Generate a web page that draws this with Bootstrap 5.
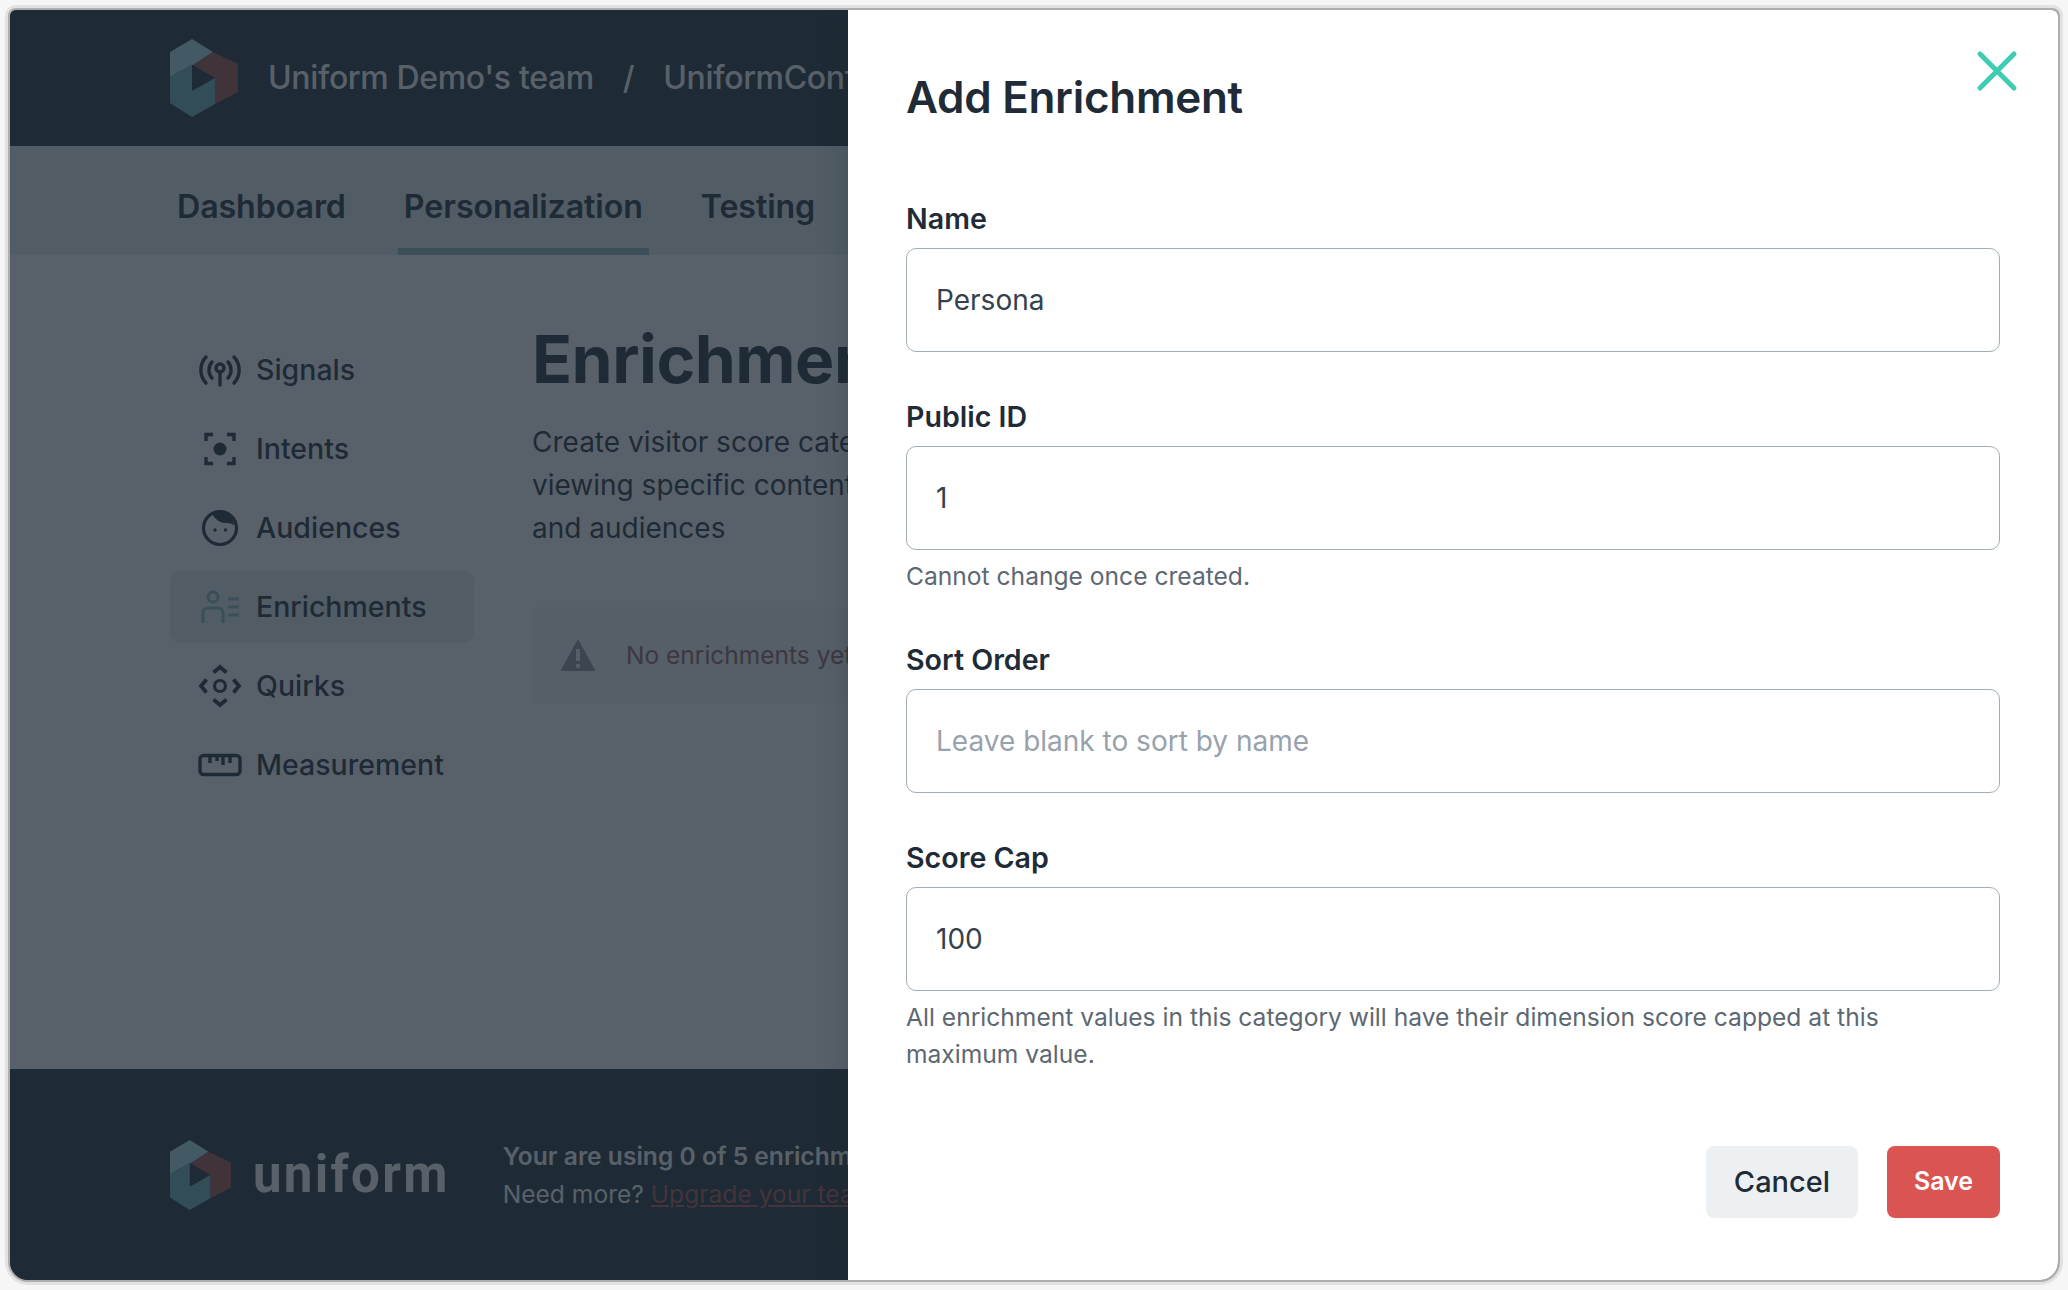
<!DOCTYPE html>
<html lang="en">
<head>
  <meta charset="UTF-8" />
  <title>Add Enrichment</title>
  <link href="https://cdn.jsdelivr.net/npm/bootstrap@5.3.2/dist/css/bootstrap.min.css" rel="stylesheet" />
  <style>
    html, body { height: 100%; }
    body {
      background: #f6f6f6;
      padding: 10px;
      font-family: Inter, "Noto Sans", sans-serif;
      color: #1f2b36;
      overflow: hidden;
    }
    .app-window {
      width: 2048px;
      height: 1270px;
      border-radius: 6px 6px 18px 18px;
      overflow: hidden;
      background: #fff;
      box-shadow: 0 0 0 2px #aeaeae, 0 0 0 5px #e2e2e2;
    }
    .top-bar { height: 136px; background: #1f2b36; padding-left: 160px; color: #fff; font-size: 32px; font-weight: 500; white-space: nowrap; letter-spacing: -.35px; }
    .head-logo { margin-right: 30px; }
    .crumb-sep { margin: 0 29px; }
    .tab-bar { height: 109px; background: #e2ecef; padding-left: 161px; }
    .tab-item { font-size: 32.2px; font-weight: 600; color: #1f2b36; padding: 0 6px; height: 109px; line-height: 121px; letter-spacing: -.1px; }
    .tab-item.is-active { border-bottom: 7px solid #8ab9c4; }
    .tab-gap { gap: 46px; }
    .main-area { padding: 65px 0 0 160px; }
    .side-menu { width: 304px; padding-top: 14px; }
    .side-link { height: 72px; margin-bottom: 7px; padding-left: 28px; gap: 14px; font-size: 28.5px; font-weight: 500; border-radius: 10px; color: #1f2b36; }
    .side-link.is-active { background: #e2ecef; }
    .page-body { margin-left: 58px; white-space: nowrap; }
    .page-title { font-size: 66px; font-weight: 700; line-height: 79px; margin: 0 0 22px; letter-spacing: -.5px; }
    .page-text { font-size: 28px; line-height: 43px; margin: 0 0 57px; }
    .empty-box { width: 600px; height: 96px; padding-left: 28px; gap: 30px; background: #f4f5f6; border-radius: 8px; color: #985c5c; font-size: 24.5px; }
    .foot-bar { height: 211px; background: #1f2b36; padding-left: 160px; color: #fff; white-space: nowrap; }
    .word-mark { font-family: Roboto, sans-serif; font-size: 51px; font-weight: 700; letter-spacing: 2.3px; margin-left: 22px; line-height: 1; }
    .foot-text { margin-left: 53px; font-size: 24.6px; line-height: 38px; }
    .foot-text a { color: #b0524f; }
    .dim-layer { background: rgba(30, 42, 53, .74); }
    .side-panel {
      width: 1210px;
      background: #fff;
      padding: 62px 58px 62px;
      box-shadow: 0 0 24px rgba(30, 42, 53, .25);
    }
    .panel-title { font-size: 44px; font-weight: 600; line-height: 50px; margin: 0 0 79px; letter-spacing: -.3px; }
    .close-x { top: 40px; right: 40px; width: 42px; height: 42px; background: none; border: 0; padding: 0; }
    .field-block { margin-bottom: 47px; }
    .field-label { font-size: 28.6px; font-weight: 600; line-height: 36px; margin-bottom: 11px; }
    .field-input {
      height: 104px;
      padding: 0 29px;
      font-size: 28px;
      color: #35424d;
      border: 1px solid #a3adb5;
      border-radius: 10px;
    }
    .field-input::placeholder { color: #98a2ab; }
    .field-help { font-size: 24.6px; line-height: 37px; margin-top: 8px; color: #5d6872; max-width: 1040px; }
    .btn-cancel { width: 152px; height: 72px; background: #ecf0f2; color: #1f2b36; font-size: 29px; font-weight: 500; border: 0; border-radius: 8px; }
    .btn-save { width: 113px; height: 72px; background: #da5551; color: #fff; font-size: 25px; font-weight: 600; border: 0; border-radius: 8px; }
    .panel-actions { gap: 29px; }
  </style>
</head>
<body>
<div class="app-window position-relative d-flex flex-column">

  <header class="top-bar d-flex align-items-center">
    <svg width="68" height="78" viewBox="0 0 68 78" class="head-logo flex-shrink-0">
      <polygon points="22,0 43,13 23,26 22,26 0,38 0,13" fill="#aee0e6"/>
      <polygon points="43,13 68,25 68,53 45,65 45,39 23,26" fill="#a14d49"/>
      <polygon points="0,38 22,26 22,52 45,39 45,65 22,78 0,64" fill="#6fb0bc"/>
    </svg>
    <span>Uniform Demo's team</span>
    <span class="crumb-sep">/</span>
    <span>UniformConf</span>
  </header>

  <nav class="tab-bar d-flex tab-gap">
    <a class="tab-item text-decoration-none">Dashboard</a>
    <a class="tab-item text-decoration-none is-active">Personalization</a>
    <a class="tab-item text-decoration-none">Testing</a>
  </nav>

  <main class="main-area flex-grow-1 d-flex">
    <div class="side-menu flex-shrink-0">
      <div class="side-link d-flex align-items-center">
        <svg width="44" height="44" viewBox="0 0 44 44" fill="none" stroke="#1f2b36" stroke-width="3.4" stroke-linecap="round">
          <path d="M8 9a19 19 0 0 0 0 26M36 9a19 19 0 0 1 0 26M14 14a12 12 0 0 0 0 16M30 14a12 12 0 0 1 0 16"/>
          <circle cx="22" cy="20" r="4"/><path d="M22 24v13"/>
        </svg>
        Signals
      </div>
      <div class="side-link d-flex align-items-center">
        <svg width="44" height="44" viewBox="0 0 44 44" fill="none" stroke="#1f2b36" stroke-width="3.4">
          <path d="M8 14V7.500h7M29 7.500h7V14M8 30v6.500h7M29 36.500h7V30"/>
          <circle cx="22" cy="22" r="6.500" fill="#1f2b36" stroke="none"/>
        </svg>
        Intents
      </div>
      <div class="side-link d-flex align-items-center">
        <svg width="44" height="44" viewBox="0 0 44 44" fill="none" stroke="#1f2b36" stroke-width="3.2">
          <circle cx="22" cy="22" r="16.500"/>
          <path d="M14 8c3 5 8 9 13 9 4 0 7 0 9 3C36 12 30 5 22 5c-3 0-6 1-8 3z" fill="#1f2b36" stroke="none"/>
          <circle cx="17" cy="24" r="1.700" fill="#1f2b36" stroke="none"/>
          <circle cx="27.500" cy="24" r="1.700" fill="#1f2b36" stroke="none"/>
        </svg>
        Audiences
      </div>
      <div class="side-link is-active d-flex align-items-center">
        <svg width="44" height="44" viewBox="0 0 44 44" fill="none" stroke="#8ab9c4" stroke-width="3">
          <circle cx="15" cy="12" r="5"/>
          <path d="M5 38V28c0-3 2-5 5-5h10c3 0 5 2 5 5v10"/>
          <path d="M30 14h11M30 22h11M30 30h11"/>
        </svg>
        Enrichments
      </div>
      <div class="side-link d-flex align-items-center">
        <svg width="44" height="44" viewBox="0 0 44 44" fill="none" stroke="#1f2b36" stroke-width="3.800">
          <circle cx="22" cy="22" r="5.500" stroke-width="3.200"/>
          <path d="M15.500 8.500L22 3l6.500 5.500M15.500 35.500L22 41l6.500-5.500M8.500 15.500L3 22l5.500 6.500M35.500 15.500L41 22l-5.500 6.500"/>
        </svg>
        Quirks
      </div>
      <div class="side-link d-flex align-items-center">
        <svg width="44" height="44" viewBox="0 0 44 44" fill="none" stroke="#1f2b36" stroke-width="3.400">
          <rect x="2" y="12.500" width="40" height="19" rx="3.500"/>
          <path d="M12 12v8M19 12v6M25 12v10M32 12v8"/>
        </svg>
        Measurement
      </div>
    </div>
    <section class="page-body">
      <h1 class="page-title">Enrichments</h1>
      <p class="page-text">Create visitor score categories to track when visitors are<br>viewing specific content, and use them for personalization<br>and audiences</p>
      <div class="empty-box d-flex align-items-center">
        <svg width="36" height="34" viewBox="0 0 36 34">
          <path d="M18 1L35 32a1 1 0 0 1-1 1H2a1 1 0 0 1-1-1z" fill="#8f969d"/>
          <rect x="16" y="11" width="4" height="12" fill="#f4f5f6"/>
          <rect x="16" y="26" width="4" height="4" fill="#f4f5f6"/>
        </svg>
        <span>No enrichments yet</span>
      </div>
    </section>
  </main>

  <footer class="foot-bar d-flex align-items-center">
    <svg width="61" height="70" viewBox="0 0 68 78" preserveAspectRatio="none" class="flex-shrink-0">
      <polygon points="22,0 43,13 23,26 22,26 0,38 0,13" fill="#aee0e6"/>
      <polygon points="43,13 68,25 68,53 45,65 45,39 23,26" fill="#a14d49"/>
      <polygon points="0,38 22,26 22,52 45,39 45,65 22,78 0,64" fill="#6fb0bc"/>
    </svg>
    <span class="word-mark">uniform</span>
    <div class="foot-text">
      <div class="fw-semibold">Your are using 0 of 5 enrichments</div>
      <div>Need more? <a href="#">Upgrade your team</a></div>
    </div>
  </footer>

  <div class="dim-layer position-absolute top-0 bottom-0 start-0 end-0"></div>

  <aside class="side-panel position-absolute top-0 bottom-0 end-0 d-flex flex-column">
    <button class="close-x position-absolute" type="button" aria-label="Close">
      <svg width="42" height="42" viewBox="0 0 42 42" fill="none" stroke="#3ecdb3" stroke-width="5" stroke-linecap="round"><path d="M4 4l34 34M38 4L4 38"/></svg>
    </button>
    <h2 class="panel-title">Add Enrichment</h2>
    <div class="field-block">
      <label class="form-label field-label d-block">Name</label>
      <input class="form-control field-input" value="Persona">
    </div>
    <div class="field-block">
      <label class="form-label field-label d-block">Public ID</label>
      <input class="form-control field-input" value="1">
      <div class="field-help">Cannot change once created.</div>
    </div>
    <div class="field-block">
      <label class="form-label field-label d-block">Sort Order</label>
      <input class="form-control field-input" placeholder="Leave blank to sort by name">
    </div>
    <div>
      <label class="form-label field-label d-block">Score Cap</label>
      <input class="form-control field-input" value="100">
      <div class="field-help">All enrichment values in this category will have their dimension score capped at this maximum value.</div>
    </div>
    <div class="panel-actions d-flex justify-content-end mt-auto">
      <button class="btn btn-cancel" type="button">Cancel</button>
      <button class="btn btn-save" type="button">Save</button>
    </div>
  </aside>
</div>
</body>
</html>
